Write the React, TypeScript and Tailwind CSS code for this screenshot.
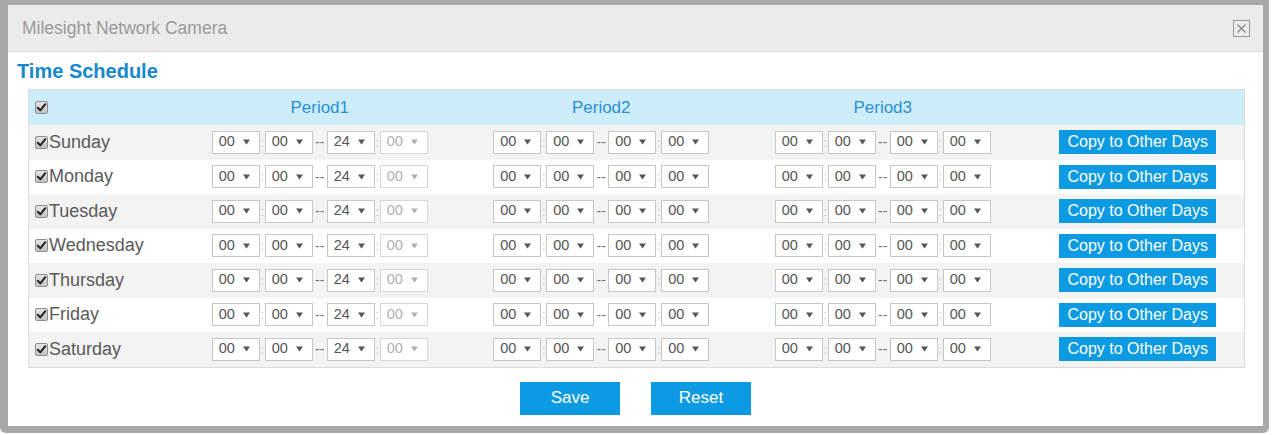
import React from 'react';

const days = ['Sunday', 'Monday', 'Tuesday', 'Wednesday', 'Thursday', 'Friday', 'Saturday'];

const font = { fontFamily: '"Liberation Sans", Arial, sans-serif' };

const CheckBox: React.FC = () => (
  <span className="inline-flex w-[13px] h-[13px] shrink-0 items-center justify-center rounded-[2px] border border-[#8e8e8e] bg-gradient-to-b from-[#e4e4e4] to-[#c2c2c2]">
    <svg width="11" height="11" viewBox="0 0 11 11">
      <path d="M1.8 5.8 L4.3 8.4 L9.3 2.2" fill="none" stroke="#222" strokeWidth="2" strokeLinecap="round" strokeLinejoin="round" />
    </svg>
  </span>
);

const Select: React.FC<{ value: string; disabled?: boolean }> = ({ value, disabled }) => (
  <div
    className={`w-[48px] h-[23px] bg-white border flex items-center justify-between pl-[6px] pr-[9px] text-[14.5px] ${
      disabled ? 'border-[#d6d6d6] text-[#b0b0b0]' : 'border-[#c6c6c6] text-[#555]'
    }`}
  >
    <span>{value}</span>
    <svg width="7" height="6" viewBox="0 0 7 6">
      <path d="M0 0.5 H7 L3.5 5.5 Z" fill={disabled ? '#b0b0b0' : '#555'} />
    </svg>
  </div>
);

const Colon = () => <span className="w-[5px] text-center text-[13px] leading-none text-[#c4c4c4]">:</span>;
const Dash = () => <span className="w-[14px] text-center text-[14px] leading-none text-[#777]">--</span>;

const Period: React.FC<{ end: string; lastDisabled?: boolean }> = ({ end, lastDisabled }) => (
  <div className="flex items-center justify-center">
    <Select value="00" />
    <Colon />
    <Select value="00" />
    <Dash />
    <Select value={end} />
    <Colon />
    <Select value="00" disabled={lastDisabled} />
  </div>
);

export default function App() {
  return (
    <div className="w-[1273px] h-[435px] bg-white" style={font}>
      <div className="w-[1269px] h-[433px] bg-[#a8a8a8] pl-[8px] pr-[6px] pt-[5px] pb-[7px] rounded-b-[6px]">
        <div className="bg-white h-full flex flex-col">
          <div className="h-[47px] shrink-0 bg-[#ebebeb] border-b border-[#dedede] flex items-center justify-between pl-[14px] pr-[13px]">
            <span className="text-[17.5px] text-[#9a9a9a]">Milesight Network Camera</span>
            <span className="w-[17px] h-[17px] border border-[#9a9a9a] flex items-center justify-center">
              <svg width="11" height="11" viewBox="0 0 11 11">
                <path d="M1.5 1.5 L9.5 9.5 M9.5 1.5 L1.5 9.5" stroke="#8a8a8a" strokeWidth="1.3" />
              </svg>
            </span>
          </div>

          <div className="pl-[9px] pt-[7px] text-[20px] leading-[24px] font-bold text-[#1688cc]">Time Schedule</div>

          <div className="mt-[6px] ml-[20px] mr-[18px] border border-[#dcdcdc]">
            <div className="grid grid-cols-[150px_281.5px_281.5px_281.5px_1fr] h-[35px] bg-[#cdedfb] items-center">
              <div className="pl-[6px] flex">
                <CheckBox />
              </div>
              {['Period1', 'Period2', 'Period3'].map((p) => (
                <div key={p} className="text-center text-[17px] text-[#2b8fd3]">
                  {p}
                </div>
              ))}
              <div />
            </div>
            {days.map((d, i) => (
              <div
                key={d}
                className={`grid grid-cols-[150px_281.5px_281.5px_281.5px_1fr] h-[34.5px] items-center ${
                  i % 2 === 0 ? 'bg-[#f3f3f3]' : 'bg-white'
                }`}
              >
                <div className="pl-[6px] flex items-center gap-[1px] text-[18px] text-[#5a5a5a]">
                  <CheckBox />
                  <span>{d}</span>
                </div>
                <Period end="24" lastDisabled />
                <Period end="00" />
                <Period end="00" />
                <div className="flex justify-center pl-[8px]">
                  <button className="w-[157px] h-[24px] bg-[#0c9be2] text-white text-[16px] leading-none">
                    Copy to Other Days
                  </button>
                </div>
              </div>
            ))}
          </div>

          <div className="flex justify-center gap-[31px] mt-[14px]">
            <button className="w-[100px] h-[33px] bg-[#0c9be2] text-white text-[17px]">Save</button>
            <button className="w-[100px] h-[33px] bg-[#0c9be2] text-white text-[17px]">Reset</button>
          </div>
        </div>
      </div>
    </div>
  );
}
